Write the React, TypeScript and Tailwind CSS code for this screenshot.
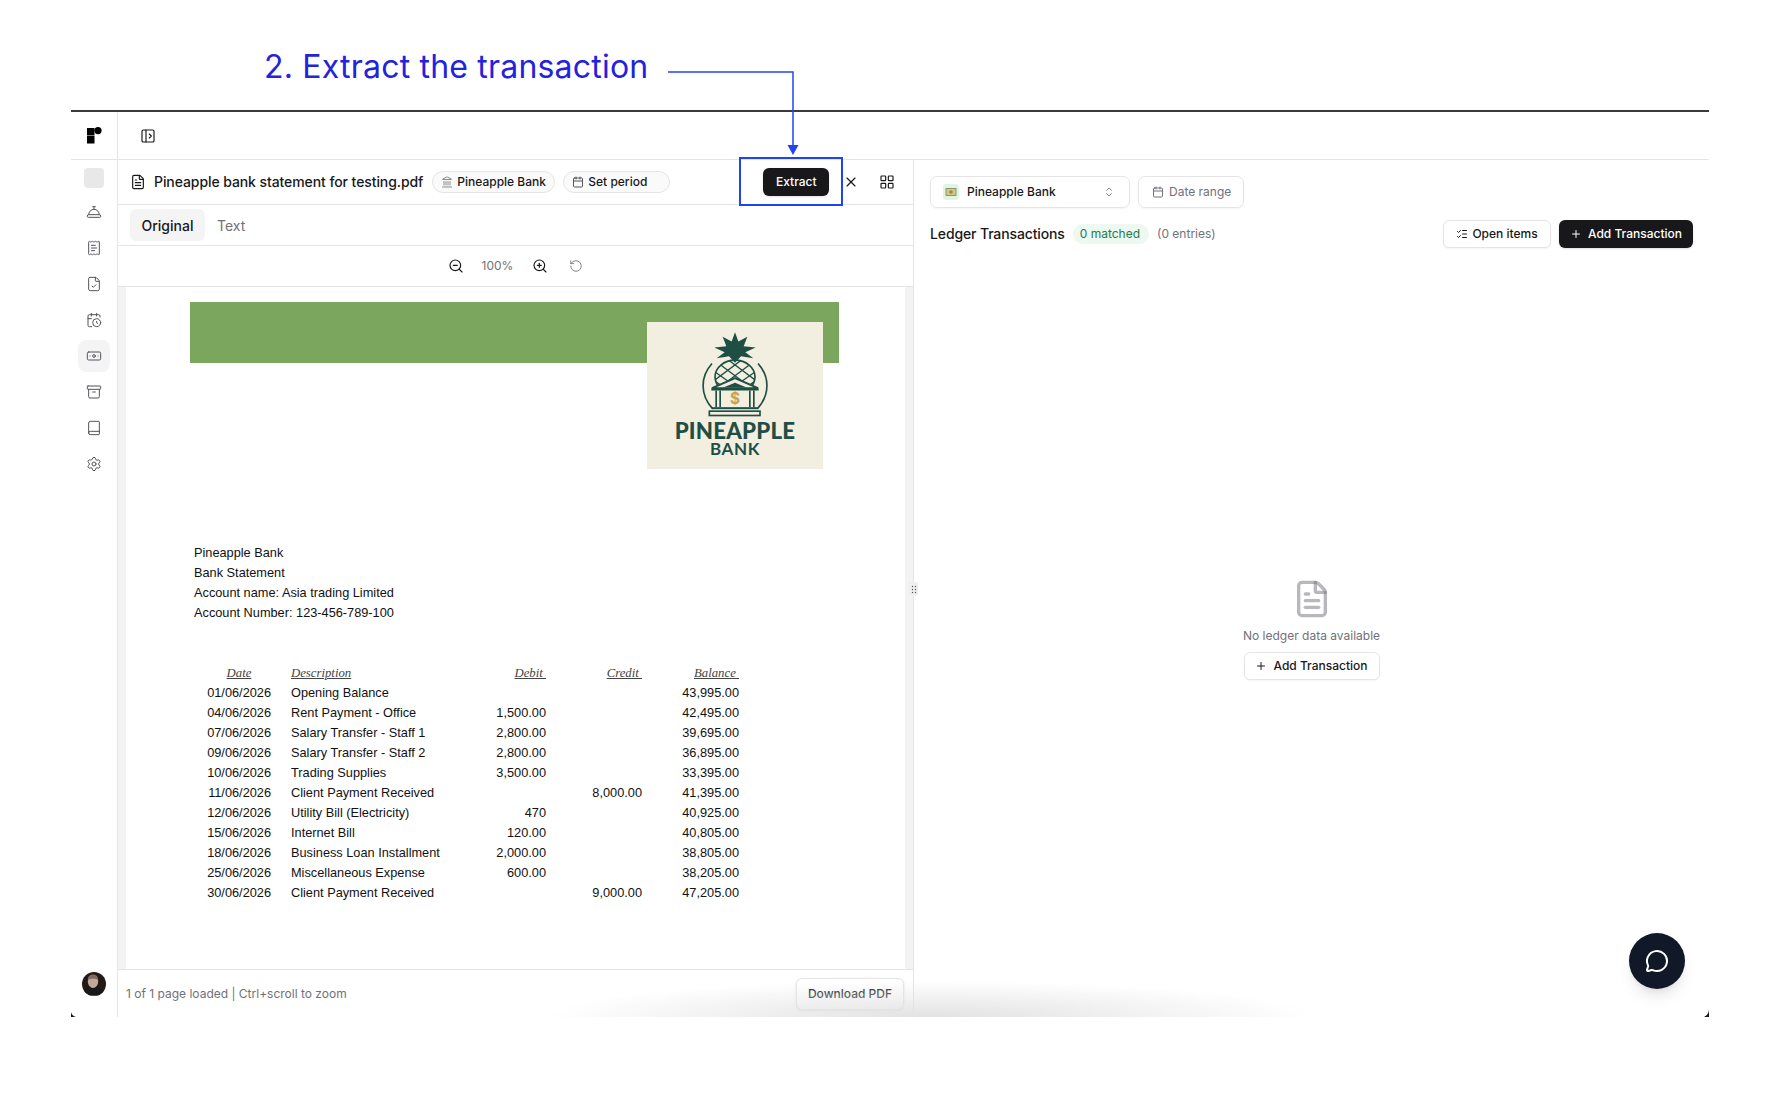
import {
  Archive,
  Banknote,
  Book,
  CalendarClock,
  Calendar,
  ChevronsUpDown,
  ConciergeBell,
  FileCheck,
  FileText,
  Landmark,
  LayoutGrid,
  ListChecks,
  MessageCircle,
  PanelLeftOpen,
  Plus,
  ReceiptText,
  RotateCcw,
  Settings,
  X,
  ZoomIn,
  ZoomOut,
} from "lucide-react";

const rows = [
  ["01/06/2026", "Opening Balance", "", "", "43,995.00"],
  ["04/06/2026", "Rent Payment - Office", "1,500.00", "", "42,495.00"],
  ["07/06/2026", "Salary Transfer - Staff 1", "2,800.00", "", "39,695.00"],
  ["09/06/2026", "Salary Transfer - Staff 2", "2,800.00", "", "36,895.00"],
  ["10/06/2026", "Trading Supplies", "3,500.00", "", "33,395.00"],
  ["11/06/2026", "Client Payment Received", "", "8,000.00", "41,395.00"],
  ["12/06/2026", "Utility Bill (Electricity)", "470", "", "40,925.00"],
  ["15/06/2026", "Internet Bill", "120.00", "", "40,805.00"],
  ["18/06/2026", "Business Loan Installment", "2,000.00", "", "38,805.00"],
  ["25/06/2026", "Miscellaneous Expense", "600.00", "", "38,205.00"],
  ["30/06/2026", "Client Payment Received", "", "9,000.00", "47,205.00"],
];

const navIcons = [ConciergeBell, ReceiptText, FileCheck, CalendarClock, Banknote, Archive, Book, Settings];

const BrandMark = () => (
  <svg width="15" height="17" viewBox="0 0 15 17" fill="#000">
    <rect x="0" y="1" width="7.5" height="7.5" />
    <circle cx="11" cy="3.6" r="3.6" />
    <rect x="0" y="9" width="7.5" height="7.5" />
  </svg>
);

const PineappleArt = () => (
  <svg width="70" height="87" viewBox="180 35 210 260" fill="none">
    <defs>
      <clipPath id="dome">
        <ellipse cx="285" cy="172" rx="60" ry="50" />
      </clipPath>
    </defs>
    <polygon
      fill="#1f4f44"
      points="285,38 295,66 322,52 311,80 347,84 316,98 340,116 303,110 285,130 267,110 230,116 254,98 223,84 259,80 248,52 275,66"
    />
    <g clipPath="url(#dome)" stroke="#1f4f44" strokeWidth="4">
      <path d="M190 170 L270 110 M200 200 L320 110 M230 210 L350 120 M270 210 L370 140 M310 210 L380 160" />
      <path d="M380 170 L300 110 M370 200 L250 110 M340 210 L220 120 M300 210 L200 140 M260 210 L190 160" />
    </g>
    <ellipse cx="285" cy="172" rx="60" ry="50" stroke="#1f4f44" strokeWidth="5" />
    <path d="M216 132 C180 172 180 226 218 268" stroke="#1f4f44" strokeWidth="5" />
    <path d="M354 132 C390 172 390 226 352 268" stroke="#1f4f44" strokeWidth="5" />
    <rect x="222" y="205" width="126" height="60" fill="#f2eee0" />
    <polygon points="285,176 216,206 354,206" fill="#f2eee0" stroke="#1f4f44" strokeWidth="6" />
    <polygon points="285,190 250,204 320,204" fill="#1f4f44" />
    <rect x="214" y="206" width="142" height="7" fill="#1f4f44" />
    <rect x="226" y="213" width="5" height="50" fill="#1f4f44" />
    <rect x="238" y="213" width="5" height="50" fill="#1f4f44" />
    <rect x="327" y="213" width="5" height="50" fill="#1f4f44" />
    <rect x="339" y="213" width="5" height="50" fill="#1f4f44" />
    <rect x="216" y="263" width="138" height="6" fill="#1f4f44" />
    <rect x="208" y="275" width="152" height="13" fill="none" stroke="#1f4f44" strokeWidth="5" />
    <text x="285" y="254" textAnchor="middle" fontSize="46" fontWeight="700" fill="#c9a24f" fontFamily="Inter, sans-serif">
      $
    </text>
  </svg>
);

const Avatar = () => (
  <svg width="24" height="24" viewBox="0 0 24 24" className="rounded-full">
    <rect width="24" height="24" fill="#241a15" />
    <path d="M0 19h24v5H0z" fill="#6b4a2e" />
    <path d="M1 23c1-6 5-8.500 10-8.500s10 2.500 12 8.500z" fill="#17171c" />
    <ellipse cx="11" cy="9.500" rx="5.200" ry="6.500" fill="#c4a896" />
    <path d="M5.800 8c0-4 2.500-5.500 5.200-5.500s5.200 1.500 5.200 5.500c-2-1.600-8-1.600-10.400 0z" fill="#7a6c63" />
  </svg>
);

const BillIcon = () => (
  <svg width="16" height="16" viewBox="0 0 16 16" className="rounded-[3px] bg-[#dff5e3]">
    <rect x="3" y="4.5" width="10" height="7" fill="#d8c77a" stroke="#7c7f6a" strokeWidth="0.8" />
    <circle cx="8" cy="8" r="1.8" fill="#8a8a6a" />
  </svg>
);

export default function App() {
  return (
    <div className="relative w-[1779px] h-[1097px] bg-white overflow-hidden font-[Inter,sans-serif] text-[#18181b]">
      <div className="h-[110px] pl-[264px] pt-[47px] text-[32px] leading-[40px] tracking-[0.2px] text-[#2323dd]">
        2. Extract the transaction
      </div>

      <div className="relative ml-[71px] w-[1638px] h-[907px] border-t-2 border-[#3a3a3a] flex flex-col overflow-hidden">
        {/* top bar */}
        <div className="flex h-[48px] shrink-0 border-b border-[#e5e5e5]">
          <div className="w-[47px] shrink-0 border-r border-[#e5e5e5] flex items-center justify-center">
            <BrandMark />
          </div>
          <div className="flex items-center pl-[22px]">
            <PanelLeftOpen size={16} strokeWidth={1.75} />
          </div>
        </div>

        <div className="flex flex-1 min-h-0">
          {/* sidebar */}
          <div className="w-[47px] shrink-0 border-r border-[#e5e5e5] flex flex-col items-center pt-[8px] pb-[21px]">
            <div className="w-[20px] h-[20px] rounded-[4px] bg-[#e8e8e8] mb-[6px]" />
            {navIcons.map((Icon, i) => (
              <div
                key={i}
                className={
                  i === 4
                    ? "w-[32px] h-[32px] my-[2px] rounded-[8px] bg-[#f4f4f5] flex items-center justify-center text-[#52525b]"
                    : "w-[32px] h-[32px] my-[2px] flex items-center justify-center text-[#52525b]"
                }
              >
                <Icon size={16} strokeWidth={1.5} />
              </div>
            ))}
            <div className="mt-auto -ml-[1px]">
              <Avatar />
            </div>
          </div>

          {/* pdf pane */}
          <div className="relative w-[796px] shrink-0 border-r border-[#e5e5e5] flex flex-col">
            <div className="h-[45px] shrink-0 border-b border-[#e5e5e5] flex items-center pl-[12px]">
              <FileText size={16} strokeWidth={1.75} className="shrink-0" />
              <span className="ml-[8px] -mt-[1px] text-[14px] tracking-[-0.085px] font-medium whitespace-nowrap">
                Pineapple bank statement for testing.pdf
              </span>
              <span className="ml-[9px] h-[22px] w-[123px] rounded-full border border-[#e5e5e5] bg-[#fafafa] flex items-center pl-[8px] gap-[4px] text-[12px] font-medium">
                <Landmark size={12} className="text-[#8a8a8f]" />
                Pineapple Bank
              </span>
              <span className="ml-[8px] h-[22px] w-[107px] rounded-full border border-[#e5e5e5] bg-[#fafafa] flex items-center pl-[8px] gap-[4px] text-[12px] font-medium">
                <Calendar size={12} className="text-[#55555a]" />
                Set period
              </span>
              <button className="ml-[93px] h-[28px] w-[66px] rounded-[6px] bg-[#18181b] text-white text-[12px] font-medium shadow-sm">
                Extract
              </button>
              <X size={16} strokeWidth={1.75} className="ml-[14px]" />
              <LayoutGrid size={16} strokeWidth={1.75} className="ml-[20px]" />
            </div>

            <div className="h-[41px] shrink-0 border-b border-[#e5e5e5] flex items-center pl-[12px] gap-[12px] text-[14px]">
              <div className="h-[32px] w-[75px] rounded-[6px] bg-[#f4f4f5] flex items-center justify-center font-medium">
                Original
              </div>
              <div className="text-[#71717a]">Text</div>
            </div>

            <div className="h-[41px] shrink-0 border-b border-[#e5e5e5] flex items-center justify-center">
              <ZoomOut size={16} strokeWidth={1.75} />
              <span className="ml-[18px] text-[12px] text-[#71717a]">100%</span>
              <ZoomIn size={16} strokeWidth={1.75} className="ml-[19px]" />
              <RotateCcw size={14} strokeWidth={1.5} className="ml-[21px] text-[#71717a]" />
            </div>

            <div className="flex-1 min-h-0 bg-[#f3f3f4] px-[8px] overflow-hidden">
              <div className="relative h-full bg-white pt-[15px] font-['Liberation_Sans',Arial,sans-serif] text-[12.75px] leading-[20px] text-[#111]">
                <div className="relative ml-[64px] w-[649px] h-[61px] bg-[#7aa75d]">
                  <div className="absolute left-[457px] top-[20px] w-[176px] h-[147px] bg-[#f2eee0] flex flex-col items-center pt-[9px]">
                    <PineappleArt />
                    <div className="mt-[3px] font-[Lato,sans-serif] font-black text-[#1f4f44] text-[22.3px] leading-[19px] tracking-[0.2px]">
                      PINEAPPLE
                    </div>
                    <div className="font-[Lato,sans-serif] font-bold text-[#1f4f44] text-[17px] leading-[18px] tracking-[0.6px]">
                      BANK
                    </div>
                  </div>
                </div>

                <div className="mt-[180px] ml-[68px]">
                  <div>Pineapple Bank</div>
                  <div>Bank Statement</div>
                  <div>Account name: Asia trading Limited</div>
                  <div>Account Number: 123-456-789-100</div>
                </div>

                <div className="mt-[40px] ml-[81px] w-[532px]">
                  <div className="grid grid-cols-[64px_195px_80px_96px_97px] font-['Liberation_Serif',serif] italic underline text-[#444] whitespace-pre">
                    <div className="text-center">Date</div>
                    <div className="pl-[20px]">Description</div>
                    <div className="text-right">Debit </div>
                    <div className="text-right">Credit </div>
                    <div className="text-right">Balance </div>
                  </div>
                  {rows.map((r) => (
                    <div key={r[0]} className="grid grid-cols-[64px_195px_80px_96px_97px] whitespace-nowrap">
                      <div className="text-right">{r[0]}</div>
                      <div className="pl-[20px]">{r[1]}</div>
                      <div className="text-right">{r[2]}</div>
                      <div className="text-right">{r[3]}</div>
                      <div className="text-right">{r[4]}</div>
                    </div>
                  ))}
                </div>
              </div>
            </div>

            <div className="h-[48px] shrink-0 border-t border-[#e5e5e5] flex items-center justify-between pl-[8px] pr-[9px] pt-[1px]">
              <span className="text-[12px] text-[#71717a]">1 of 1 page loaded | Ctrl+scroll to zoom</span>
              <button className="h-[32px] w-[108px] rounded-[6px] border border-[#e5e5e5] bg-white text-[12px] font-medium shadow-sm">
                Download PDF
              </button>
            </div>

            {/* resize handle */}
            <div className="absolute right-[-5px] top-[422px] w-[9px] h-[14px] rounded-[2px] bg-[#f0f0f1] flex items-center justify-center z-10">
              <svg width="6" height="9" viewBox="0 0 6 9" fill="#52525b">
                <circle cx="1.5" cy="1.5" r="0.7" />
                <circle cx="4.5" cy="1.5" r="0.7" />
                <circle cx="1.5" cy="4.5" r="0.7" />
                <circle cx="4.5" cy="4.5" r="0.7" />
                <circle cx="1.5" cy="7.5" r="0.7" />
                <circle cx="4.5" cy="7.5" r="0.7" />
              </svg>
            </div>
          </div>

          {/* ledger pane */}
          <div className="flex-1 flex flex-col px-[16px] pt-[16px]">
            <div className="flex gap-[8px]">
              <div className="w-[200px] h-[32px] rounded-[7px] border border-[#e5e5e5] shadow-xs flex items-center pl-[12px] pr-[14px] text-[12px] font-medium">
                <BillIcon />
                <span className="ml-[8px]">Pineapple Bank</span>
                <ChevronsUpDown size={12} className="ml-auto text-[#8a8a8f]" />
              </div>
              <div className="w-[106px] h-[32px] rounded-[7px] border border-[#e5e5e5] shadow-xs flex items-center pl-[13px] gap-[5px] text-[12px] text-[#71717a]">
                <Calendar size={12} />
                Date range
              </div>
            </div>

            <div className="mt-[12px] flex items-center h-[28px]">
              <span className="-mt-[1px] text-[14px] tracking-[-0.13px] font-medium">Ledger Transactions</span>
              <span className="ml-[8px] h-[20px] pl-[7px] pr-[9px] rounded-full bg-[#edf8f1] text-[#1f7a4d] text-[12px] leading-[20px]">
                0 matched
              </span>
              <span className="ml-[8px] text-[12px] text-[#71717a]">(0 entries)</span>
              <button className="ml-auto h-[28px] w-[108px] rounded-[6px] border border-[#e5e5e5] bg-white shadow-xs flex items-center justify-center gap-[4px] text-[12px] font-medium">
                <ListChecks size={12} />
                Open items
              </button>
              <button className="ml-[8px] h-[28px] w-[134px] rounded-[6px] bg-[#18181b] text-white shadow-sm flex items-center justify-center gap-[6px] text-[12px] font-medium">
                <Plus size={12} />
                Add Transaction
              </button>
            </div>

            <div className="flex-1 flex flex-col items-center pt-[331px]">
              <FileText size={40} strokeWidth={2} className="text-[#71717a]/50" />
              <div className="mt-[8px] text-[12px] text-[#71717a]">No ledger data available</div>
              <button className="mt-[7px] h-[28px] w-[136px] rounded-[6px] border border-[#e5e5e5] bg-white shadow-xs flex items-center justify-center gap-[6px] text-[12px] font-medium">
                <Plus size={12} />
                Add Transaction
              </button>
            </div>
          </div>
        </div>

        {/* soft shadow along the window's lower edge */}
        <div className="absolute left-[470px] bottom-0 w-[780px] h-[36px] pointer-events-none bg-[radial-gradient(ellipse_at_bottom,#e2e2e2_0%,rgba(255,255,255,0)_70%)]" />

        {/* chat launcher */}
        <div className="absolute right-[24px] bottom-[28px] w-[56px] h-[56px] rounded-full bg-[#111827] shadow-lg flex items-center justify-center text-white">
          <MessageCircle size={24} strokeWidth={2} />
        </div>

        {/* window corners cut off by the crop */}
        <svg className="absolute left-0 bottom-0" width="5" height="5" viewBox="0 0 5 5">
          <path d="M0 0C0.5 2.5 2 4 5 5H0z" fill="#18181b" />
        </svg>
        <svg className="absolute right-0 bottom-0" width="5" height="8" viewBox="0 0 5 8">
          <path d="M5 0C5 3.5 3.5 6.5 0 8H5z" fill="#18181b" />
        </svg>
      </div>

      {/* annotation */}
      <svg className="absolute left-0 top-0 pointer-events-none" width="1779" height="220" fill="none">
        <path d="M668 72H793V146" stroke="#1f45f0" strokeWidth="1.5" />
        <path d="M787.5 145H798.5L793 155z" fill="#1f45f0" />
      </svg>
      <div className="absolute left-[739px] top-[157px] w-[104px] h-[49px] border-2 border-[#1f45f0] pointer-events-none" />
    </div>
  );
}
